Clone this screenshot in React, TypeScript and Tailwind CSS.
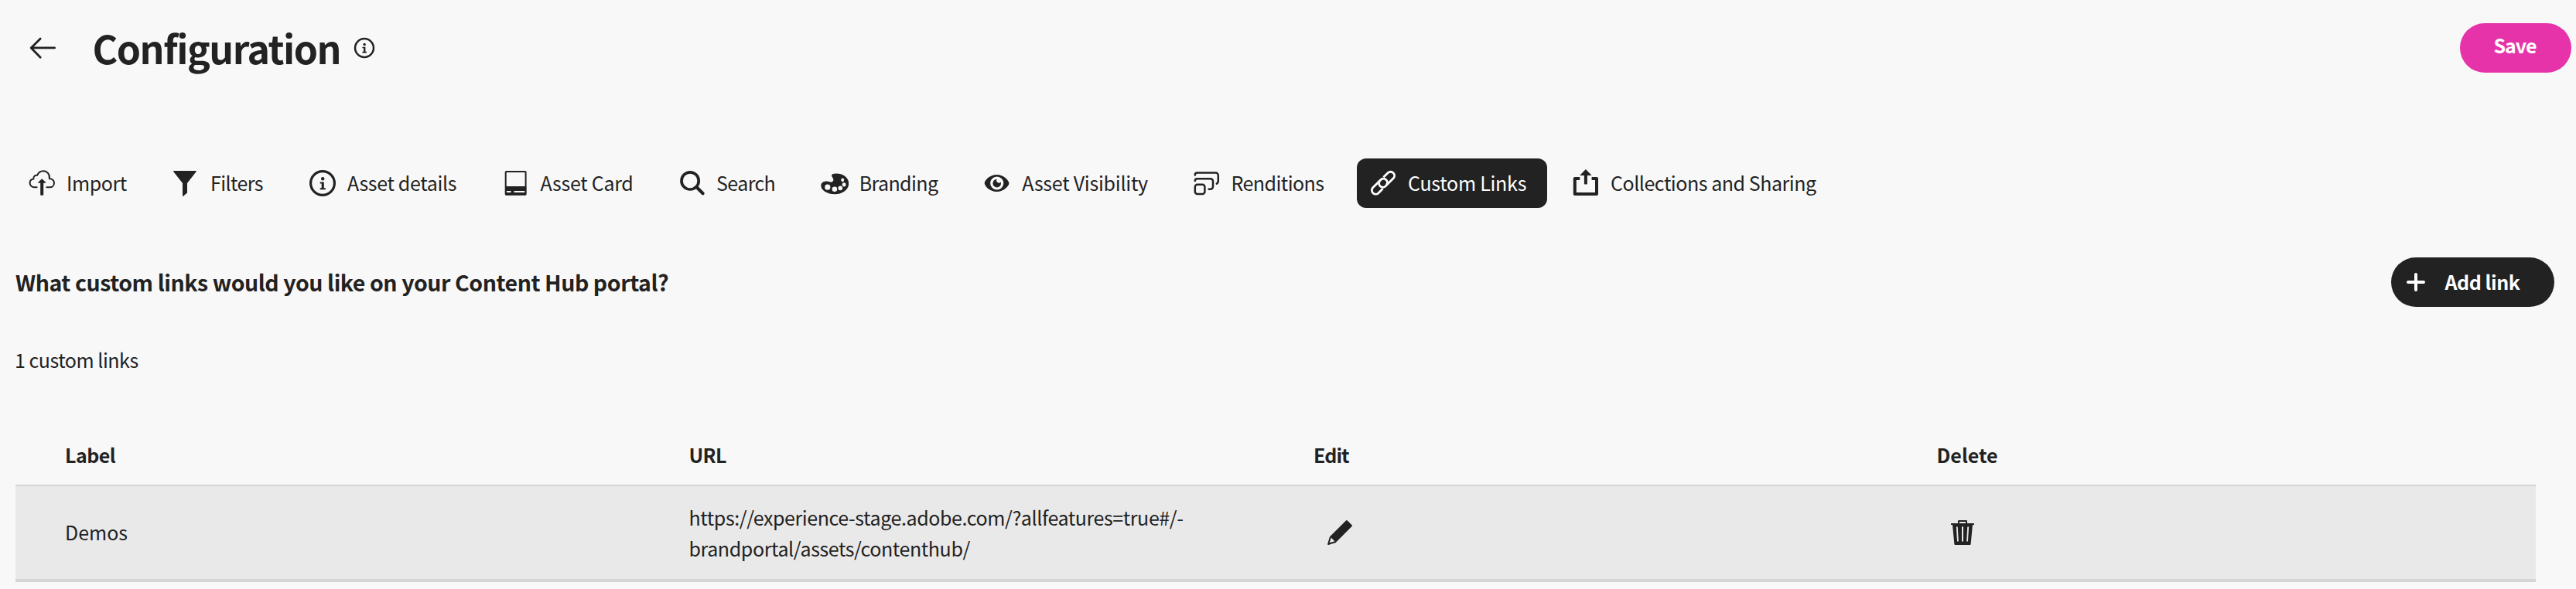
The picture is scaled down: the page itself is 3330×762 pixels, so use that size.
import React from "react";

type IconProps = { children: React.ReactNode; className?: string };

function Icon({ children, className = "size-9" }: IconProps) {
  return (
    <svg viewBox="0 0 36 36" className={`${className} shrink-0`} fill="none" stroke="none" aria-hidden="true">
      {children}
    </svg>
  );
}

const infoShapes = (
  <>
    <circle cx="18" cy="18" r="15.4" stroke="currentColor" strokeWidth="3.2" />
    <circle cx="18.2" cy="12.2" r="2.2" fill="currentColor" />
    <path d="M14.7 16.4h5.1v7.8h2v2h-7.1v-2h2v-5.8h-2z" fill="currentColor" />
  </>
);

const importIcon = (
  <Icon>
    <path
      d="M11.6 23.3H8.2A5.6 5.6 0 0 1 2.6 17.7C2.6 14.6 4.9 12.9 7.4 12.6C6.9 9.4 9 7.4 12.2 7.7C13.6 4 16.6 2.2 20 2.2C24.6 2.2 28.6 6 27.9 12.2C31.5 12 34 14.5 34 17.7C34 21 31.6 23.3 28.4 23.3H24.4"
      stroke="currentColor"
      strokeWidth="2"
      strokeLinecap="round"
      strokeLinejoin="round"
    />
    <path d="M18.2 12.2L23 16.8a.5.5 0 0 1-.4.9H20.2V32.8a1 1 0 0 1-1 1H17.2a1 1 0 0 1-1-1V17.7H13.8a.5.5 0 0 1-.4-.9z" fill="currentColor" />
  </Icon>
);

const filtersIcon = (
  <Icon>
    <path d="M2.6 2H31.2a.6.6 0 0 1 .5 1L20 18V30.6L14.6 35a.4.4 0 0 1-.6-.3V18L2.2 3A.6.6 0 0 1 2.6 2z" fill="currentColor" />
  </Icon>
);

const cardIcon = (
  <Icon>
    <rect x="4.7" y="3" width="25.9" height="29.8" rx="0.8" stroke="currentColor" strokeWidth="2" />
    <path d="M4.2 22.1H31.2V33.3H4.2zM5.7 28V30H11.5V28zM15.5 28V30H29.4V28z" fill="currentColor" fillRule="evenodd" />
  </Icon>
);

const searchIcon = (
  <Icon>
    <circle cx="16.1" cy="14.9" r="11.1" stroke="currentColor" strokeWidth="3.7" />
    <path d="M24.4 23L32.6 31.2" stroke="currentColor" strokeWidth="4.2" strokeLinecap="round" />
  </Icon>
);

const brandingIcon = (
  <Icon>
    <path
      fillRule="evenodd"
      fill="currentColor"
      d="M19.6 5.5C29 5.2 36.2 11 36.2 18.3C36.2 26.4 28 32.2 18.4 32.2C8.3 32.2.3 27.2.3 21.2C.3 17.6 3.6 15.4 8.2 15.6C10.6 15.8 12.2 16.9 14 16.6C16 16.2 16.6 14.4 16.2 12.5C15.8 10.6 14 9.8 14.1 8C14.2 6.2 16.4 5.6 19.6 5.5ZM8.8 19.6A3.6 3.6 0 1 0 8.8 26.8A3.6 3.6 0 1 0 8.8 19.6ZM17.9 22.4A3.3 3.3 0 1 0 17.9 29A3.3 3.3 0 1 0 17.9 22.4ZM25.3 21.4A2.9 2.9 0 1 0 25.3 27.2A2.9 2.9 0 1 0 25.3 21.4ZM30.1 17.2A2.4 2.6 0 1 0 30.1 22.4A2.4 2.6 0 1 0 30.1 17.2ZM28.2 11.4A2 2.4 0 1 0 28.2 16.2A2 2.4 0 1 0 28.2 11.4Z"
    />
  </Icon>
);

const eyeIcon = (
  <Icon>
    <path
      fillRule="evenodd"
      fill="currentColor"
      d="M17.5 7C26.4 7 33.4 14.6 33.4 18.1S26.6 29.1 17.5 29.1C8.6 29.1 1.7 21.9 1.7 18.1S8.5 7 17.5 7ZM17.7 9.4A8.6 8.6 0 1 0 17.7 26.6A8.6 8.6 0 1 0 17.7 9.4Z"
    />
    <path d="M17.8 12.8A2.8 2.8 0 1 0 22.7 16.4A5.3 5.3 0 1 1 17.8 12.8Z" fill="currentColor" />
  </Icon>
);

const renditionsIcon = (
  <Icon>
    <g stroke="currentColor" strokeWidth="2.5" strokeLinecap="round" strokeLinejoin="round">
      <path d="M3.8 7.4C3.8 5.6 4.8 4.6 6.6 4.6H30.6a3.2 3.2 0 0 1 3.2 3.2V14.4C33.8 16.4 33.2 17.8 31.8 18.6" />
      <path d="M3.8 15C3.8 13.2 4.8 12.2 6.6 12.2H23.6a3.4 3.4 0 0 1 3.4 3.4V22.4a3.4 3.4 0 0 1-3.4 3.4H21.6" />
      <rect x="3.8" y="19.7" width="12.6" height="12.2" rx="3" />
    </g>
  </Icon>
);

const linkIcon = (
  <Icon>
    <g stroke="currentColor" strokeWidth="2.8">
      <path d="M18.4 10.3L24 4.7A5 5 0 0 1 31.1 11.8L21.6 21.3A5 5 0 0 1 13.4 15.6" />
      <path d="M17.6 25.1L12 30.7A5 5 0 0 1 4.9 23.6L14.4 14.1A5 5 0 0 1 22.6 19.8" />
    </g>
  </Icon>
);

const shareIcon = (
  <Icon>
    <path d="M17.9 0L25.2 7.4a.5.5 0 0 1-.4.7H19.9V18.6a1 1 0 0 1-1 1H16.9a1 1 0 0 1-1-1V8.1H11a.5.5 0 0 1-.4-.7z" fill="currentColor" />
    <path d="M10.2 12H3.8V31.9H32V12H25.6" stroke="currentColor" strokeWidth="4" strokeLinejoin="round" />
  </Icon>
);

const editIcon = (
  <Icon>
    <path
      fill="currentColor"
      d="M33.567 8.2L27.8 2.432a1.215 1.215 0 0 0-.866-.353H26.9a1.371 1.371 0 0 0-.927.406L5.084 23.372a.99.99 0 0 0-.251.422L2.055 33.1c-.114.377.459.851.783.851a.251.251 0 0 0 .062-.007c.276-.063 7.866-2.344 9.311-2.778a.972.972 0 0 0 .414-.249l20.888-20.889a1.372 1.372 0 0 0 .4-.883 1.221 1.221 0 0 0-.346-.945zM11.4 29.316c-2.161.649-4.862 1.465-6.729 2.022l2.009-6.73z"
    />
  </Icon>
);

const trashIcon = (
  <Icon>
    <path
      fill="currentColor"
      fillRule="evenodd"
      d="M12 6V3.2A1.2 1.2 0 0 1 13.2 2H22.8A1.2 1.2 0 0 1 24 3.2V6H32.3A.7.7 0 0 1 33 6.7V8H31L28.6 32.9A1.1 1.1 0 0 1 27.5 33.9H8.5A1.1 1.1 0 0 1 7.4 32.9L5 8H3V6.7A.7.7 0 0 1 3.7 6ZM14 4V6H22V4ZM9.9 11.2L11 28.8A.9.9 0 0 0 12.8 28.7L11.8 11.1A.9.9 0 0 0 9.9 11.2ZM17 11.1V28.7A1 1 0 0 0 19 28.7V11.1A1 1 0 0 0 17 11.1ZM24.2 11.1L23.2 28.7A.9.9 0 0 0 25 28.8L26.1 11.2A.9.9 0 0 0 24.2 11.1Z"
    />
  </Icon>
);

type Tab = { label: string; icon: React.ReactNode; size: string; active?: boolean };

const tabs: Tab[] = [
  { label: "Import", icon: importIcon, size: "w-[170px] tracking-[-0.4px]" },
  { label: "Filters", icon: filtersIcon, size: "w-[161px] tracking-[-0.6px]" },
  { label: "Asset details", icon: <Icon>{infoShapes}</Icon>, size: "w-[233.5px] tracking-[-0.34px]" },
  { label: "Asset Card", icon: cardIcon, size: "w-[211.5px] tracking-[-0.27px]" },
  { label: "Search", icon: searchIcon, size: "w-[168.7px] tracking-[-0.6px]" },
  { label: "Branding", icon: brandingIcon, size: "w-[194.6px] tracking-[-0.6px]" },
  { label: "Asset Visibility", icon: eyeIcon, size: "w-[254.2px] tracking-[-0.24px]" },
  { label: "Renditions", icon: renditionsIcon, size: "w-[212.5px] tracking-[-0.55px]" },
  { label: "Custom Links", icon: linkIcon, size: "w-[246px] tracking-[-0.25px]", active: true },
  { label: "Collections and Sharing", icon: shareIcon, size: "w-[360px] tracking-[-0.45px]" },
];

export default function App() {
  return (
    <div className="flex h-[762px] w-[3330px] flex-col overflow-hidden bg-[#f8f8f8] font-['Noto_Sans_CJK_SC','Open_Sans',sans-serif] text-[25px] text-[#222222]">
      <header className="flex h-[123px] shrink-0 items-center justify-between pr-[6px] pl-9">
        <div className="flex items-center">
          <button aria-label="Back" className="flex">
            <Icon>
              <g stroke="currentColor" strokeWidth="2.8" strokeLinecap="round" strokeLinejoin="round">
                <path d="M4.2 17.9H34.6M16.2 6L4.2 17.9L16.2 30.2" />
              </g>
            </Icon>
          </button>
          <h1 className="ml-[47.5px] pb-[2px] text-[50px] leading-[62px] font-bold tracking-[-1.5px]">Configuration</h1>
          <Icon className="ml-[16.5px] size-7">{infoShapes}</Icon>
        </div>
        <button className="h-16 w-36 rounded-full bg-[#e633a9] pr-[2px] pb-[6px] font-bold tracking-[-1px] text-white">Save</button>
      </header>

      <nav className="mt-[82px] flex h-16 shrink-0 gap-4 pl-5">
        {tabs.map((tab) => (
          <button
            key={tab.label}
            className={`flex h-16 shrink-0 items-center rounded-xl pl-4 whitespace-nowrap ${tab.size} ${
              tab.active ? "bg-[#222222] text-white" : ""
            }`}
          >
            {tab.icon}
            <span className="ml-[14px]">{tab.label}</span>
          </button>
        ))}
      </nav>

      <section className="mt-16 flex h-16 shrink-0 items-center justify-between pr-7 pl-5">
        <h2 className="text-[28.5px] font-bold tracking-[-0.44px]">
          What custom links would you like on your Content Hub portal?
        </h2>
        <button className="flex h-16 w-[211px] items-center rounded-full bg-[#222222] pl-5 font-bold tracking-[-0.45px] text-white">
          <svg viewBox="0 0 24 24" className="size-6" aria-hidden="true">
            <path d="M12 2V22M2 12H22" stroke="currentColor" strokeWidth="4" strokeLinecap="round" />
          </svg>
          <span className="ml-[25.5px]">Add link</span>
        </button>
      </section>

      <p className="mt-12 shrink-0 pl-[19px] leading-10 tracking-[-0.47px]">1 custom links</p>

      <div className="mt-[62px] ml-5 flex w-[3258px] shrink-0 flex-col">
        <div className="grid h-20 grid-cols-[806.5px_806.5px_806.5px_1fr] items-center pt-1 pl-16 font-bold">
          <span className="tracking-[-0.52px]">Label</span>
          <span className="tracking-[-0.65px]">URL</span>
          <span className="pl-px tracking-[-0.9px]">Edit</span>
          <span>Delete</span>
        </div>
        <div className="grid h-[126px] grid-cols-[806.5px_806.5px_806.5px_1fr] items-center border-t-2 border-b-4 border-[#d5d5d5] bg-[#e9e9e9] pl-16">
          <span>Demos</span>
          <span className="leading-10 tracking-[-0.4px]">
            https://experience-stage.adobe.com/?allfeatures=true#/-
            <br />
            brandportal/assets/contenthub/
          </span>
          <button aria-label="Edit" className="flex pl-[17px]">
            {editIcon}
          </button>
          <button aria-label="Delete" className="flex pl-[15px]">
            {trashIcon}
          </button>
        </div>
      </div>
    </div>
  );
}
